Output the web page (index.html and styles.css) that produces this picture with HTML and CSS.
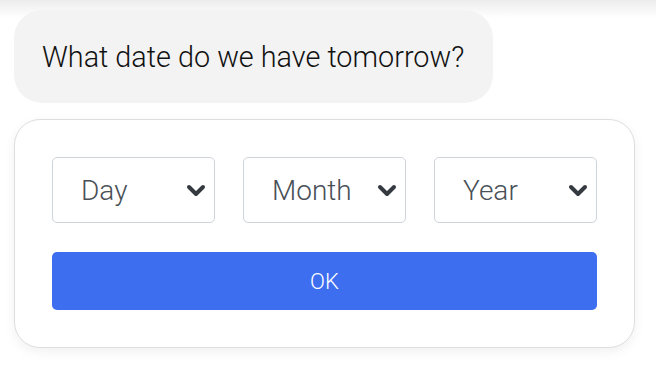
FILE: index.html
```html
<!DOCTYPE html>
<html lang="en">
<head>
    <meta charset="UTF-8">
    <meta name="viewport" content="width=device-width, initial-scale=1.0">
    <title>Date question</title>
    <link rel="stylesheet" href="styles.css">
</head>
<body>
    <div class="chat">
        <div class="bubble">What date do we have tomorrow?</div>

        <div class="card">
            <div class="selects">
                <div class="select">
                    <span>Day</span>
                    <svg viewBox="0 0 20 14"><path d="M3 3l7 7 7-7"/></svg>
                </div>
                <div class="select">
                    <span>Month</span>
                    <svg viewBox="0 0 20 14"><path d="M3 3l7 7 7-7"/></svg>
                </div>
                <div class="select">
                    <span>Year</span>
                    <svg viewBox="0 0 20 14"><path d="M3 3l7 7 7-7"/></svg>
                </div>
            </div>
            <button class="ok">OK</button>
        </div>
    </div>
</body>
</html>
```

FILE: styles.css
```css
:root {
    --bubble-bg: #f3f3f3;
    --card-border: #dedede;
    --select-border: #ced4da;
    --select-text: #495057;
    --primary: #3d6ef0;
}

body {
    margin: 0;
    padding: 0;
    background: linear-gradient(#ececec 0, #fff 18px) no-repeat, #fff;
    font-family: Roboto, "Liberation Sans", sans-serif;
    font-weight: 300;
    height: 368px;
    overflow: hidden;
}

.chat {
    padding: 10px 21px 0 14px;
}

.bubble {
    display: inline-flex;
    align-items: center;
    height: 93px;
    padding: 0 29px 0 28px;
    background: var(--bubble-bg);
    border-radius: 28px;
    color: #111;
    font-size: 28.8px;
}

.card {
    margin-top: 16px;
    padding: 37px;
    border: 1px solid var(--card-border);
    border-radius: 26px;
    box-shadow: 0 4px 12px rgba(0, 0, 0, 0.06);
    background: #fff;
}

.selects {
    display: grid;
    grid-template-columns: repeat(3, 163px);
    justify-content: space-between;
}

.select {
    display: flex;
    align-items: center;
    justify-content: space-between;
    height: 64px;
    padding: 0 8px 0 28px;
    border: 1px solid var(--select-border);
    border-radius: 5px;
    color: var(--select-text);
    font-size: 28px;
}

.select svg {
    width: 20px;
    height: 14px;
    margin-top: 2px;
    fill: none;
    stroke: #343a40;
    stroke-width: 4;
    stroke-linecap: round;
    stroke-linejoin: round;
}

.ok {
    display: block;
    width: 100%;
    height: 58px;
    margin-top: 29px;
    border: none;
    border-radius: 5px;
    background: var(--primary);
    color: #fff;
    font-family: Roboto, "Liberation Sans", sans-serif;
    font-weight: 300;
    font-size: 22px;
    cursor: pointer;
}
```
